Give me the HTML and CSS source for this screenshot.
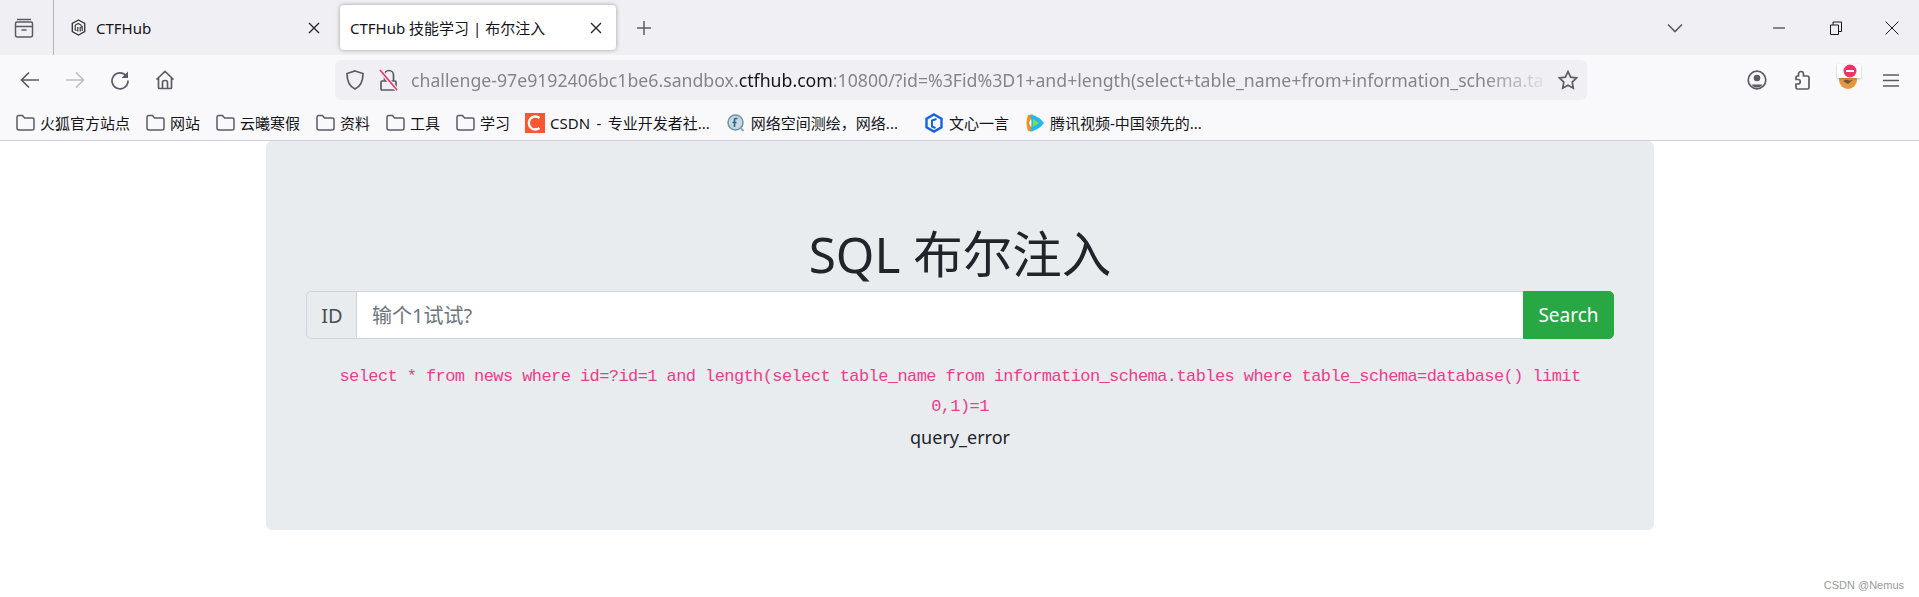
FILE: index.html
```html
<!DOCTYPE html>
<html lang="zh-CN">
<head>
<meta charset="utf-8">
<title>CTFHub 技能学习 | 布尔注入</title>
<link rel="stylesheet" href="styles.css">
</head>
<body>
<header class="chrome">
  <div class="tabbar">
    <div class="tabs-side">
      <svg class="ico" width="22" height="22" viewBox="0 0 22 22"><path d="M4 2.5h14M2.5 6.500a1.500 1.500 0 0 1 1.500-1.500h14a1.500 1.500 0 0 1 1.500 1.500v11.500a2 2 0 0 1-2 2h-13a2 2 0 0 1-2-2zM2.500 9.500h17M8.500 13h5"/></svg>
    </div>
    <div class="tab">
      <svg class="fav" width="15" height="17" viewBox="0 0 15 17"><path class="fav-hex" d="M7.500 1l6.200 3.500v8L7.500 16l-6.200-3.500v-8z"/><path class="fav-in" d="M4.200 6.200v4.600l1.300.8M4.200 6.200l3-1.700 3.500 2M6.800 8v4.500M9.200 8v4.500M9.200 8.500l2-1v4.500"/></svg>
      <span class="tab-title">CTFHub</span>
      <svg class="tab-x" width="12" height="12" viewBox="0 0 12 12"><path d="M1 1l10 10M11 1L1 11"/></svg>
    </div>
    <div class="tab tab-active">
      <span class="tab-title">CTFHub 技能学习 | 布尔注入</span>
      <svg class="tab-x" width="12" height="12" viewBox="0 0 12 12"><path d="M1 1l10 10M11 1L1 11"/></svg>
    </div>
    <svg class="ico plus" width="16" height="16" viewBox="0 0 16 16"><path d="M8 1v14M1 8h14"/></svg>
    <div class="spacer"></div>
    <svg class="ico chev" width="16" height="10" viewBox="0 0 16 10"><path d="M1 1.500l7 7 7-7"/></svg>
    <svg class="win win-min" width="12" height="12" viewBox="0 0 12 12"><path d="M0 6h12"/></svg>
    <svg class="win win-res" width="12" height="14" viewBox="0 0 12 14"><path d="M.5 4h8v9.500h-8zM3 4V1h8.500v9.500H8.500"/></svg>
    <svg class="win win-x" width="14" height="14" viewBox="0 0 14 14"><path d="M.5.500l13 13M13.500.500l-13 13"/></svg>
  </div>

  <div class="toolbar">
    <svg class="nav" width="20" height="18" viewBox="0 0 20 18"><path d="M19 9H2M9 1.500L1.500 9 9 16.500"/></svg>
    <svg class="nav nav-off" width="20" height="18" viewBox="0 0 20 18"><path d="M1 9h17M11 1.500L18.500 9 11 16.500"/></svg>
    <svg class="nav" width="20" height="20" viewBox="0 0 20 20"><path d="M16.500 6.200A8 8 0 1 0 18 10.500"/><path class="solid" d="M18 1.500v6.500h-6.500z"/></svg>
    <svg class="nav" width="20" height="20" viewBox="0 0 20 20"><path d="M1.500 9.500L10 1.500l8.500 8M3.500 8v9.500a1 1 0 0 0 1 1h11a1 1 0 0 0 1-1V8M7.500 18.500v-6a2 2 0 0 1 2-2h1a2 2 0 0 1 2 2v6"/></svg>
    <div class="urlbar">
      <svg class="nav shield" width="18" height="20" viewBox="0 0 18 20"><path d="M9 1l8 2.500c0 7-1.500 12.500-8 15.500C2.500 16 1 10.500 1 3.500z"/></svg>
      <svg class="lock" width="20" height="22" viewBox="0 0 20 22"><path class="lock-b" d="M3 12h13a1 1 0 0 1 1 1v7a1 1 0 0 1-1 1H3a1 1 0 0 1-1-1v-7a1 1 0 0 1 1-1zM5.500 12V6a4.500 4.500 0 0 1 9 0v6"/><path class="lock-h" d="M1 1l17 20"/><path class="lock-r" d="M1 1l17 20"/></svg>
      <div class="url"><span>challenge-97e9192406bc1be6.sandbox.</span><b>ctfhub.com</b><span>:10800/?id=%3Fid%3D1+and+length(select+table_name+from+information_schema.ta</span></div>
      <svg class="nav star" width="20" height="20" viewBox="0 0 20 20"><path d="M10 1.500l2.600 5.600 6 .8-4.400 4.200 1.100 6.100L10 15.200l-5.300 3 1.100-6.100L1.400 7.900l6-.8z"/></svg>
    </div>
    <div class="spacer"></div>
    <svg class="nav acct" width="20" height="20" viewBox="0 0 20 20"><circle cx="10" cy="10" r="8.800"/><circle class="solid" cx="10" cy="8" r="3.300"/><path class="solid" d="M4.500 14.500h11a6.500 6.500 0 0 1-11 0z"/></svg>
    <svg class="nav ext" width="20" height="20" viewBox="0 0 20 20"><path d="M9 1.500a2.500 2.500 0 0 1 2.500 2.500v2h4a1.500 1.500 0 0 1 1.500 1.500v10a1.500 1.500 0 0 1-1.500 1.500h-10A1.500 1.500 0 0 1 4 17.500V14h2a2 2 0 0 0 0-4.500H4V7.500A1.500 1.500 0 0 1 5.500 6h1V4A2.500 2.500 0 0 1 9 1.500z"/></svg>
    <div class="foxwrap">
      <svg width="26" height="28" viewBox="0 0 26 28"><circle class="fox-c" cx="12" cy="18" r="9"/><path class="fox-d" d="M7 19l5 3 5-4-4 .5-3-1z"/><path class="fox-t" d="M1 2h24v14H1z"/><circle class="fox-r" cx="14" cy="9" r="6.500"/><path class="fox-m" d="M10 9h8"/></svg>
    </div>
    <svg class="nav menu" width="16" height="13" viewBox="0 0 16 13"><path d="M0 1h16M0 6.500h16M0 12h16"/></svg>
  </div>

  <nav class="bookmarks">
    <a class="bm b1"><svg class="folder" width="19" height="17" viewBox="0 0 19 17"><path d="M1 3a1.500 1.500 0 0 1 1.500-1.500h4l2 2.500h8a1.500 1.500 0 0 1 1.500 1.500v8.500a2 2 0 0 1-2 2H3a2 2 0 0 1-2-2z"/></svg>火狐官方站点</a>
    <a class="bm b2"><svg class="folder" width="19" height="17" viewBox="0 0 19 17"><path d="M1 3a1.500 1.500 0 0 1 1.500-1.500h4l2 2.500h8a1.500 1.500 0 0 1 1.500 1.500v8.500a2 2 0 0 1-2 2H3a2 2 0 0 1-2-2z"/></svg>网站</a>
    <a class="bm b2"><svg class="folder" width="19" height="17" viewBox="0 0 19 17"><path d="M1 3a1.500 1.500 0 0 1 1.500-1.500h4l2 2.500h8a1.500 1.500 0 0 1 1.500 1.500v8.500a2 2 0 0 1-2 2H3a2 2 0 0 1-2-2z"/></svg>云曦寒假</a>
    <a class="bm b2"><svg class="folder" width="19" height="17" viewBox="0 0 19 17"><path d="M1 3a1.500 1.500 0 0 1 1.500-1.500h4l2 2.500h8a1.500 1.500 0 0 1 1.500 1.500v8.500a2 2 0 0 1-2 2H3a2 2 0 0 1-2-2z"/></svg>资料</a>
    <a class="bm b2"><svg class="folder" width="19" height="17" viewBox="0 0 19 17"><path d="M1 3a1.500 1.500 0 0 1 1.500-1.500h4l2 2.500h8a1.500 1.500 0 0 1 1.500 1.500v8.500a2 2 0 0 1-2 2H3a2 2 0 0 1-2-2z"/></svg>工具</a>
    <a class="bm b2"><svg class="folder" width="19" height="17" viewBox="0 0 19 17"><path d="M1 3a1.500 1.500 0 0 1 1.500-1.500h4l2 2.500h8a1.500 1.500 0 0 1 1.500 1.500v8.500a2 2 0 0 1-2 2H3a2 2 0 0 1-2-2z"/></svg>学习</a>
    <a class="bm b-csdn"><svg width="20" height="20" viewBox="0 0 20 20"><path class="csdn-bg" d="M0 0h20v20H0z"/><path class="csdn-c" d="M14.500 5A6.500 6.500 0 1 0 14.500 15"/></svg>CSDN - 专业开发者社...</a>
    <a class="bm b-f"><svg width="20" height="20" viewBox="0 0 20 20"><circle class="f-o" cx="9.500" cy="9.500" r="7.500"/><path class="f-t" d="M11.500 5.500H9.500a1 1 0 0 0-1 1V14M6.500 9.500h4"/><path class="f-h" d="M14.500 15l3 3"/></svg>网络空间测绘，网络...</a>
    <a class="bm b-wx"><svg width="20" height="20" viewBox="0 0 20 20"><path class="wx-o" d="M10 1.500l7.500 4.300v8.400L10 18.500l-7.500-4.300V5.800z"/><path class="wx-i" d="M12.500 6L8 7.500v6l3.500 1.500"/></svg>文心一言</a>
    <a class="bm b-tv"><svg width="20" height="20" viewBox="0 0 20 20"><path class="tv-a" d="M3 2C1 7 1 13 3 18l5 .5L4 10l4-8.500z"/><path class="tv-b" d="M5 1.500c6 1 11 4 14 8.500-3 4.500-8 7.500-14 8.500 2-6 2-11 0-17z"/><path class="tv-c" d="M8 6l6 4-6 4z"/></svg>腾讯视频-中国领先的...</a>
  </nav>
</header>

<main class="page">
  <section class="jumbotron">
    <h1 class="title">SQL 布尔注入</h1>
    <form class="input-group">
      <span class="addon">ID</span>
      <input class="field" type="text" placeholder="输个1试试?">
      <button class="search" type="button">Search</button>
    </form>
    <div class="result">
      <code class="sql">select * from news where id=?id=1 and length(select table_name from information_schema.tables where table_schema=database() limit 0,1)=1</code>
      <p class="status">query_error</p>
    </div>
  </section>
  <footer class="mark">CSDN @Nemus</footer>
</main>
</body>
</html>
```

FILE: styles.css
```css
* { box-sizing: border-box; }
html, body { margin: 0; padding: 0; height: 597px; overflow: hidden; }
body { background: #fff; color: #212529; font-family: "Noto Sans", "Noto Sans CJK SC", sans-serif; }
svg { display: block; flex: none; fill: none; }

.chrome { height: 141px; background: #f9f9fb; border-bottom: 1px solid #cfcfd8; }
.spacer { flex: 1; }

.tabbar { height: 55px; background: #f0f0f4; display: flex; align-items: center; }
.tabs-side { width: 54px; height: 55px; border-right: 1px solid #b5b5bb; display: flex; align-items: center; justify-content: center; padding-right: 5px; }
.ico path { stroke: #5b5b66; stroke-width: 1.500; }
.tab { width: 286px; height: 45px; padding: 0 20px 0 17px; display: flex; align-items: center; font-size: 15px; color: #15141a; }
.fav { margin-right: 10px; }
.fav-hex { fill: #f4f4f6; stroke: #3a3a3a; stroke-width: 1.400; }
.fav-in { stroke: #3a3a3a; stroke-width: 1.200; }
.tab-title { flex: 1; white-space: nowrap; }
.tab-x path { stroke: #26262b; stroke-width: 1.400; }
.tab-active { width: 276px; padding: 0 14px 0 10px; background: #fff; border-radius: 4px; box-shadow: 0 0 4px rgba(0,0,0,.35); }
.plus { margin-left: 20px; }
.chev { margin-right: 90px; }
.chev path { stroke-width: 1.600; }
.win path { stroke: #1a1a1a; stroke-width: 1; }
.win-min { margin-right: 45px; }
.win-res { margin-right: 43px; }
.win-x { margin-right: 20px; }

.toolbar { height: 50px; display: flex; align-items: center; padding-left: 20px; }
.nav path, .nav circle { stroke: #5b5b66; stroke-width: 1.700; }
.nav .solid { fill: #5b5b66; stroke: none; }
.nav + .nav { margin-left: 25px; }
.nav-off path { stroke: #bdbdc3; }
.urlbar { width: 1252px; height: 40px; margin-left: 160px; background: #f0f0f4; border-radius: 6px; display: flex; align-items: center; padding: 0 9px 0 11px; }
.urlbar .nav { margin-left: 0; }
.lock { margin: 0 12px 0 15px; }
.lock-b { stroke: #5b5b66; stroke-width: 1.700; }
.lock-h { stroke: #f0f0f4; stroke-width: 4; }
.lock-r { stroke: #f0346b; stroke-width: 1.700; }
.url { flex: 1; min-width: 0; white-space: nowrap; font-size: 17.700px; color: #84848c; -webkit-mask-image: linear-gradient(90deg, #000 94%, rgba(0,0,0,.12) 99.500%); mask-image: linear-gradient(90deg, #000 94%, rgba(0,0,0,.12) 99.500%); }
.url b { font-weight: 400; color: #15141a; }
.urlbar .star { margin-left: 8px; }
.acct { margin-right: 25px; }
.foxwrap { margin: -9px 21px 0 24px; }
.fox-c { fill: #e9973c; }
.fox-d { fill: #6b5a3e; }
.fox-t { fill: #fff; filter: drop-shadow(0 1px 1px rgba(0,0,0,.25)); }
.fox-r { fill: #f0346b; }
.fox-m { stroke: #fff; stroke-width: 2; }
.foxwrap + .menu { margin: 0 20px 0 0; }
.toolbar .ext { margin-left: 0; }

.bookmarks { height: 35px; padding-left: 16px; display: flex; align-items: center; font-size: 15px; color: #15141a; }
.bm { display: flex; align-items: center; white-space: nowrap; }
.bm svg { margin-right: 5px; }
.folder path { stroke: #5b5b66; stroke-width: 1.500; }
.b2 { margin-left: 16px; }
.b-csdn { margin-left: 15px; word-spacing: 2.500px; }
.b-f { margin-left: 16px; }
.b-wx { margin-left: 26px; }
.b-tv { margin-left: 16px; }
.csdn-bg { fill: #fc5531; }
.csdn-c { stroke: #fff; stroke-width: 2.400; }
.f-o { fill: #c7d9e2; stroke: #6e93a6; stroke-width: 1.500; }
.f-t { stroke: #35637c; stroke-width: 1.600; }
.f-h { stroke: #8aa; stroke-width: 2; }
.wx-o { stroke: #1463e0; stroke-width: 2.400; }
.wx-i { stroke: #1463e0; stroke-width: 2; }
.tv-a { fill: #ff8a1f; }
.tv-b { fill: #23b8f0; }
.tv-c { fill: #7be04a; }

.page { position: relative; height: 456px; padding-left: 1px; display: flex; flex-direction: column; align-items: center; }
.jumbotron { width: 1388px; height: 389px; background: #e9ecef; border-radius: 6px; padding: 76px 40px 0; text-align: center; }
.title { margin: 0; font-size: 49.500px; line-height: 74px; font-weight: 400; color: #212529; }
.input-group { display: flex; height: 48px; font-size: 20px; }
.addon { width: 51px; padding-left: 1px; display: flex; align-items: center; justify-content: center; background: #e9ecef; color: #495057; border: 1px solid #ced4da; border-radius: 5px 0 0 5px; }
.field { flex: 1; min-width: 0; padding: 0 15px; font: inherit; color: #495057; background: #fff; border: 1px solid #ced4da; border-width: 1px 0; outline: 0; }
.field::placeholder { color: #6c757d; opacity: 1; }
.search { width: 91px; padding: 0; font: inherit; font-size: 19px; color: #fff; background: #28a745; border: 1px solid #28a745; border-radius: 0 5px 5px 0; }
.result { margin-top: 23px; }
.sql { display: block; padding: 0 20px; font-family: "Liberation Mono", monospace; font-size: 17px; letter-spacing: -.58px; line-height: 30px; color: #e83e8c; }
.status { margin: 0; font-size: 18px; line-height: 30px; color: #212529; }
.mark { position: absolute; right: 15px; bottom: 6px; font-family: "Liberation Sans", sans-serif; font-size: 11px; color: #999; }
```
